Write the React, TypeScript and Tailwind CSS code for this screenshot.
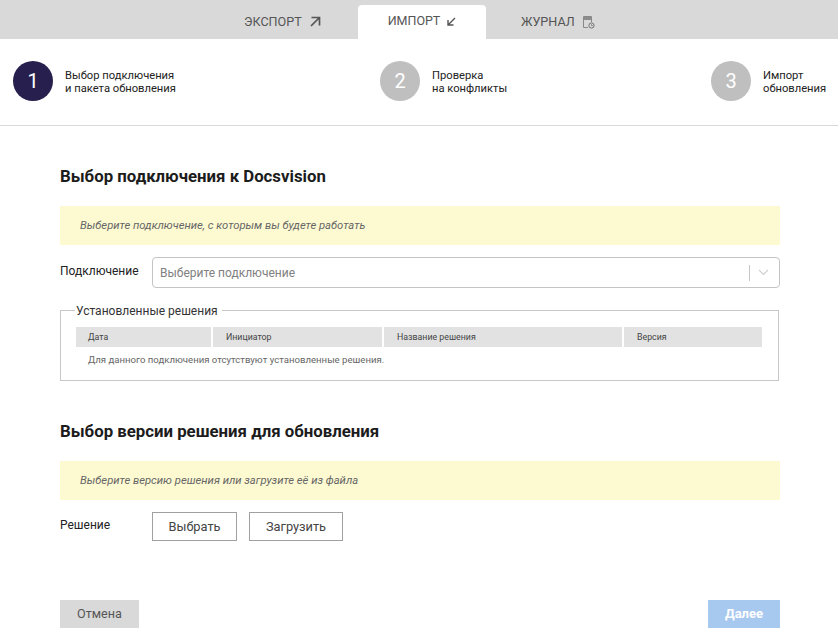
import React from "react";

function Step({ n, a, b, active, className }: { n: string; a: string; b: string; active?: boolean; className: string }) {
  return (
    <div className={`flex items-center ${className}`}>
      <div className={`flex h-10 w-10 shrink-0 items-center justify-center rounded-full text-[20px] text-white ${active ? "bg-[#271f4d]" : "bg-[#bfbfbf]"}`}>{n}</div>
      <div className="ml-3 pt-[2px] text-[11.2px] leading-[13px] text-[#222]">
        <div>{a}</div>
        <div>{b}</div>
      </div>
    </div>
  );
}

function Notice({ children }: { children: React.ReactNode }) {
  return <div className="flex h-[39px] items-center bg-[#fdfad2] pl-5 pt-[1px] text-[11.25px] italic text-[#666]">{children}</div>;
}

export default function App() {
  return (
    <div className="h-[636px] w-[838px] overflow-hidden bg-white font-['Roboto',sans-serif]">
      <div className="flex h-[39px] items-end bg-[#d9d9d9] pl-[244px] text-[#555]">
        <div className="flex h-[34px] w-[114px] items-center text-[12.6px]">
          <span>ЭКСПОРТ</span>
          <svg className="ml-[8px] -mt-[2px]" width="11" height="11" viewBox="0 0 11 11" fill="none" stroke="#555" strokeWidth="1.7"><path d="M1.5 1.5H9.5V9.5M9.5 1.5L1 10" /></svg>
        </div>
        <div className="flex h-[34px] w-[128px] items-center justify-center rounded-t-[4px] bg-white pb-[2px] text-[12.5px]">
          <span>ИМПОРТ</span>
          <svg className="ml-[7px]" width="9" height="9" viewBox="0 0 9 9" fill="none" stroke="#555" strokeWidth="1.4"><path d="M8 1L1 8M1 3V8H6.5" /></svg>
        </div>
        <div className="ml-[35px] flex h-[34px] items-center text-[12.6px]">
          <span>ЖУРНАЛ</span>
          <svg className="ml-[8px] mt-[1px]" width="12" height="13" viewBox="0 0 12 13" fill="none">
            <path d="M0.5 0.5H8.5V6M5 11.5H0.5V0.5" stroke="#888" />
            <path d="M1 1H8V4H1Z" fill="#8c8c8c" />
            <circle cx="8.5" cy="9.5" r="2.6" stroke="#666" strokeWidth="0.9" />
            <path d="M8.5 8V9.7H10" stroke="#666" strokeWidth="0.6" />
          </svg>
        </div>
      </div>

      <div className="flex h-[87px] items-center border-b border-[#d9d9d9] pb-[2px] pl-[13px]">
        <Step n="1" a="Выбор подключения" b="и пакета обновления" active className="w-[367px]" />
        <Step n="2" a="Проверка" b="на конфликты" className="w-[331px]" />
        <Step n="3" a="Импорт" b="обновления" className="" />
      </div>

      <div className="pl-[60px] pr-[58px]">
        <h2 className="mt-[40px] text-[16.8px] font-bold leading-[20px] text-[#1c1c1c]">Выбор подключения к Docsvision</h2>
        <div className="mt-[20px]"><Notice>Выберите подключение, с которым вы будете работать</Notice></div>

        <div className="mt-[12px] flex items-start">
          <div className="w-[92px] pt-[7px] text-[12px] leading-[14px] text-[#222]">Подключение</div>
          <div className="flex h-[31px] flex-1 items-center rounded-[4px] border border-[#c4c4c4] pl-[7px] pr-[10px]">
            <span className="flex-1 text-[12px] text-[#808080]">Выберите подключение</span>
            <span className="h-[16px] w-px bg-[#c4c4c4]" />
            <svg className="ml-[8px]" width="11" height="7" viewBox="0 0 11 7" fill="none" stroke="#d0d0d0" strokeWidth="1.2"><path d="M1 1L5.5 5.5L10 1" /></svg>
          </div>
        </div>

        <fieldset className="mr-[1px] mt-[14px] h-[79px] border border-[#c8c8c8] pl-[15px] pr-[16px]">
          <legend className="ml-[-1px] px-[1px] pr-[4px] pt-[2px] text-[12px] leading-[14px] text-[#333]">Установленные решения</legend>
          <div className="mt-[9px] flex h-[20px] gap-[2px] pt-0 text-[8.8px] text-[#444]">
            <div className="flex w-[135px] items-center bg-[#e2e2e2] pl-[12px] pt-[1px]">Дата</div>
            <div className="flex w-[169px] items-center bg-[#e2e2e2] pl-[13px] pt-[1px]">Инициатор</div>
            <div className="flex w-[238px] items-center bg-[#e2e2e2] pl-[13px] pt-[1px]">Название решения</div>
            <div className="flex flex-1 items-center bg-[#e2e2e2] pl-[13px] pt-[1px]">Версия</div>
          </div>
          <div className="mt-[7px] pl-[12px] text-[9.6px] leading-[12px] text-[#666]">Для данного подключения отсутствуют установленные решения.</div>
        </fieldset>

        <h2 className="mt-[40px] text-[16.8px] font-bold leading-[20px] text-[#1c1c1c]">Выбор версии решения для обновления</h2>
        <div className="mt-[20px]"><Notice>Выберите версию решения или загрузите её из файла</Notice></div>

        <div className="mt-[12px] flex items-start">
          <div className="w-[92px] pt-[6px] text-[12px] leading-[14px] text-[#222]">Решение</div>
          <button className="h-[29px] w-[85px] border border-[#a0a0a0] text-[12.8px] text-[#444]">Выбрать</button>
          <button className="ml-[12px] h-[29px] w-[94px] border border-[#a0a0a0] text-[12.8px] text-[#444]">Загрузить</button>
        </div>

        <div className="mt-[59px] flex justify-between">
          <button className="h-[28px] w-[79px] bg-[#d9d9d9] text-[12.6px] text-[#555]">Отмена</button>
          <button className="h-[28px] w-[72px] bg-[#a7c8ef] text-[13px] font-bold text-white">Далее</button>
        </div>
      </div>
    </div>
  );
}
